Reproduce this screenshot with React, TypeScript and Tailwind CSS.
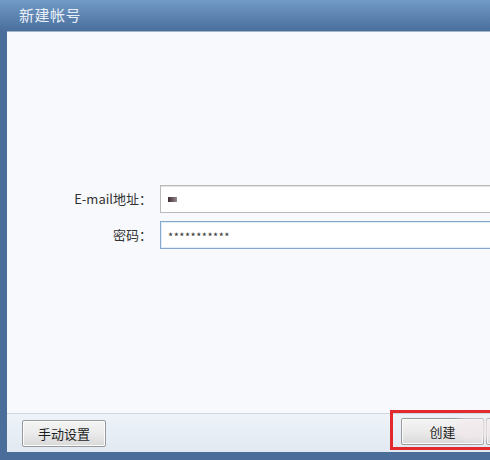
const FONT = { fontFamily: '"Noto Sans CJK SC", "Noto Sans", sans-serif' };

function WinButton({ label, className = '' }: { label: string; className?: string }) {
  return (
    <button
      className={`h-[27px] rounded-[2px] border border-[#9a9a9a] bg-gradient-to-b from-[#f4f4f4] via-[#ebebeb] to-[#d9d9d9] text-[13px] text-[#1e1e1e] leading-none shadow-[inset_0_0_0_1px_#fbfbfb] ${className}`}
    >
      {label}
    </button>
  );
}

export default function App() {
  return (
    <div className="w-[490px] h-[460px] overflow-hidden flex flex-col bg-[#4a6d99]" style={FONT}>
      {/* title bar */}
      <div className="h-[31px] shrink-0 flex items-center pl-[19px] bg-gradient-to-b from-[#729bc8] to-[#4a6f9c]">
        <span className="text-[15px] text-[#e9eff7] tracking-[0.5px]">新建帐号</span>
      </div>

      <div className="flex-1 flex flex-col ml-[7px] mb-[8px] min-h-0">
        <div className="h-px bg-[#a6b5c6] shrink-0" />

        {/* body */}
        <div className="flex-1 bg-[#f7f9fd] pt-[153px]">
          <div className="grid grid-cols-[145px_1fr] gap-x-[8px] gap-y-[8px] items-center">
            <label className="text-right text-[13px] text-[#333]">E-mail地址：</label>
            <div className="h-[28px] w-[340px] bg-white border border-[#b9b9b9] shadow-[inset_0_1px_0_#e4e4e4] flex items-center pl-[7px]">
              <span className="w-[9px] h-[5px] bg-gradient-to-r from-[#3c2e30] to-[#9c8c90] blur-[0.5px]" />
            </div>
            <label className="text-right text-[13px] text-[#333]">密码：</label>
            <div className="h-[28px] w-[340px] bg-white border border-[#86a8cf] shadow-[inset_0_0_0_1px_#e1edf8] flex items-center pl-[7px]">
              <span className="text-[11px] text-[#333] tracking-[0.5px] leading-none pt-[3px]">***********</span>
            </div>
          </div>
        </div>

        {/* footer */}
        <div className="h-px bg-[#cfd6df] shrink-0" />
        <div className="h-[38px] shrink-0 bg-gradient-to-b from-[#eef3f9] to-[#e2e9f2] flex items-center pl-[15px]">
          <WinButton label="手动设置" className="w-[84px] shrink-0" />
          <div className="relative ml-[295px] shrink-0 flex gap-[2px] -mt-[3px]">
            <WinButton label="创建" className="w-[83px]" />
            <WinButton label="" className="w-[83px]" />
            <div className="absolute -left-[11px] -top-[8px] w-[130px] h-[40px] border-[3px] border-[#e2292d]" />
            <div className="absolute left-[55px] top-[0px] w-[40px] h-[22px] rounded-full bg-[#f1e8eb]/80 blur-[3px]" />
          </div>
        </div>
      </div>
    </div>
  );
}
